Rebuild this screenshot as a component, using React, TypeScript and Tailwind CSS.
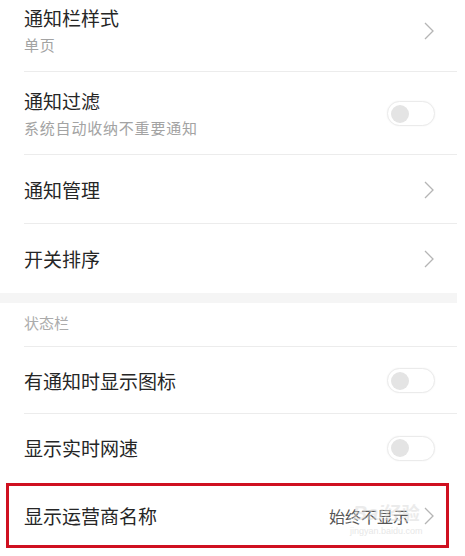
import React from 'react';

const font = { fontFamily: '"Noto Sans CJK SC", "Noto Sans", sans-serif' };

const Chevron = () => (
  <svg width="12" height="20" viewBox="0 0 12 20" className="shrink-0">
    <path d="M2 2 L10 10 L2 18" fill="none" stroke="#b5b5b5" strokeWidth="1.3" />
  </svg>
);

const Toggle = () => (
  <div className="w-[48px] h-[25px] rounded-full border border-[#ebebeb] bg-white flex items-center px-[3px] shadow-[0_0_2px_rgba(0,0,0,0.06)]">
    <div className="w-[18px] h-[18px] rounded-full bg-[#e4e4e4]" />
  </div>
);

type RowProps = {
  title: string;
  sub?: string;
  right?: React.ReactNode;
  h: string;
  divider?: boolean;
};

const Row: React.FC<RowProps> = ({ title, sub, right, h, divider = true }) => (
  <div className={`relative flex items-center pl-[24px] pr-[22px] ${h}`}>
    <div className="flex-1 flex flex-col">
      <span className="text-[19px] leading-[24px] text-[#262626]">{title}</span>
      {sub && (
        <span className="text-[15px] leading-[20px] mt-[5px] tracking-[0.8px] text-[#a3a3a3]">{sub}</span>
      )}
    </div>
    {right}
    {divider && <div className="absolute left-[24px] right-0 bottom-0 h-px bg-[#ececec]" />}
  </div>
);

export default function App() {
  return (
    <div className="w-[465px] h-[556px] overflow-hidden bg-white" style={font}>
      <div className="w-[457px]">
        <div className="mt-[-11px]">
          <Row title="通知栏样式" sub="单页" h="h-[83px]" right={<Chevron />} />
        </div>
        <Row title="通知过滤" sub="系统自动收纳不重要通知" h="h-[83px]" right={<Toggle />} />
        <Row title="通知管理" h="h-[69px]" right={<Chevron />} />
        <Row title="开关排序" h="h-[69px]" divider={false} right={<Chevron />} />
        <div className="h-[10px] bg-[#f5f5f5]" />
        <div className="relative h-[44px] pl-[24px] flex items-center pb-[4px]">
          <span className="text-[15px] text-[#ababab]">状态栏</span>
          <div className="absolute left-[24px] right-0 bottom-0 h-px bg-[#ececec]" />
        </div>
        <Row title="有通知时显示图标" h="h-[67px]" right={<Toggle />} />
        <Row title="显示实时网速" h="h-[68px]" divider={false} right={<Toggle />} />
        <div className="relative">
          <Row
            title="显示运营商名称"
            h="h-[68px]"
            divider={false}
            right={
              <div className="flex items-center gap-[14px]">
                <span className="text-[16px] text-[#555]">始终不显示</span>
                <Chevron />
              </div>
            }
          />
          <div className="absolute left-[6px] top-[1px] w-[443px] h-[65px] border-[3px] border-[#cf1020]" />
          <div className="absolute left-[350px] top-[20px] flex flex-col items-center opacity-50">
            <span className="text-[20px] leading-[20px] font-bold text-[#d8d8d8] italic" style={{ fontFamily: '"Liberation Sans", sans-serif' }}>
              Bai<span className="text-[18px] not-italic" style={font}>经验</span>
            </span>
            <span className="text-[9px] leading-[12px] mt-[2px] text-[#d0d0d0]" style={{ fontFamily: '"Liberation Sans", sans-serif' }}>jingyan.baidu.com</span>
          </div>
        </div>
      </div>
    </div>
  );
}
